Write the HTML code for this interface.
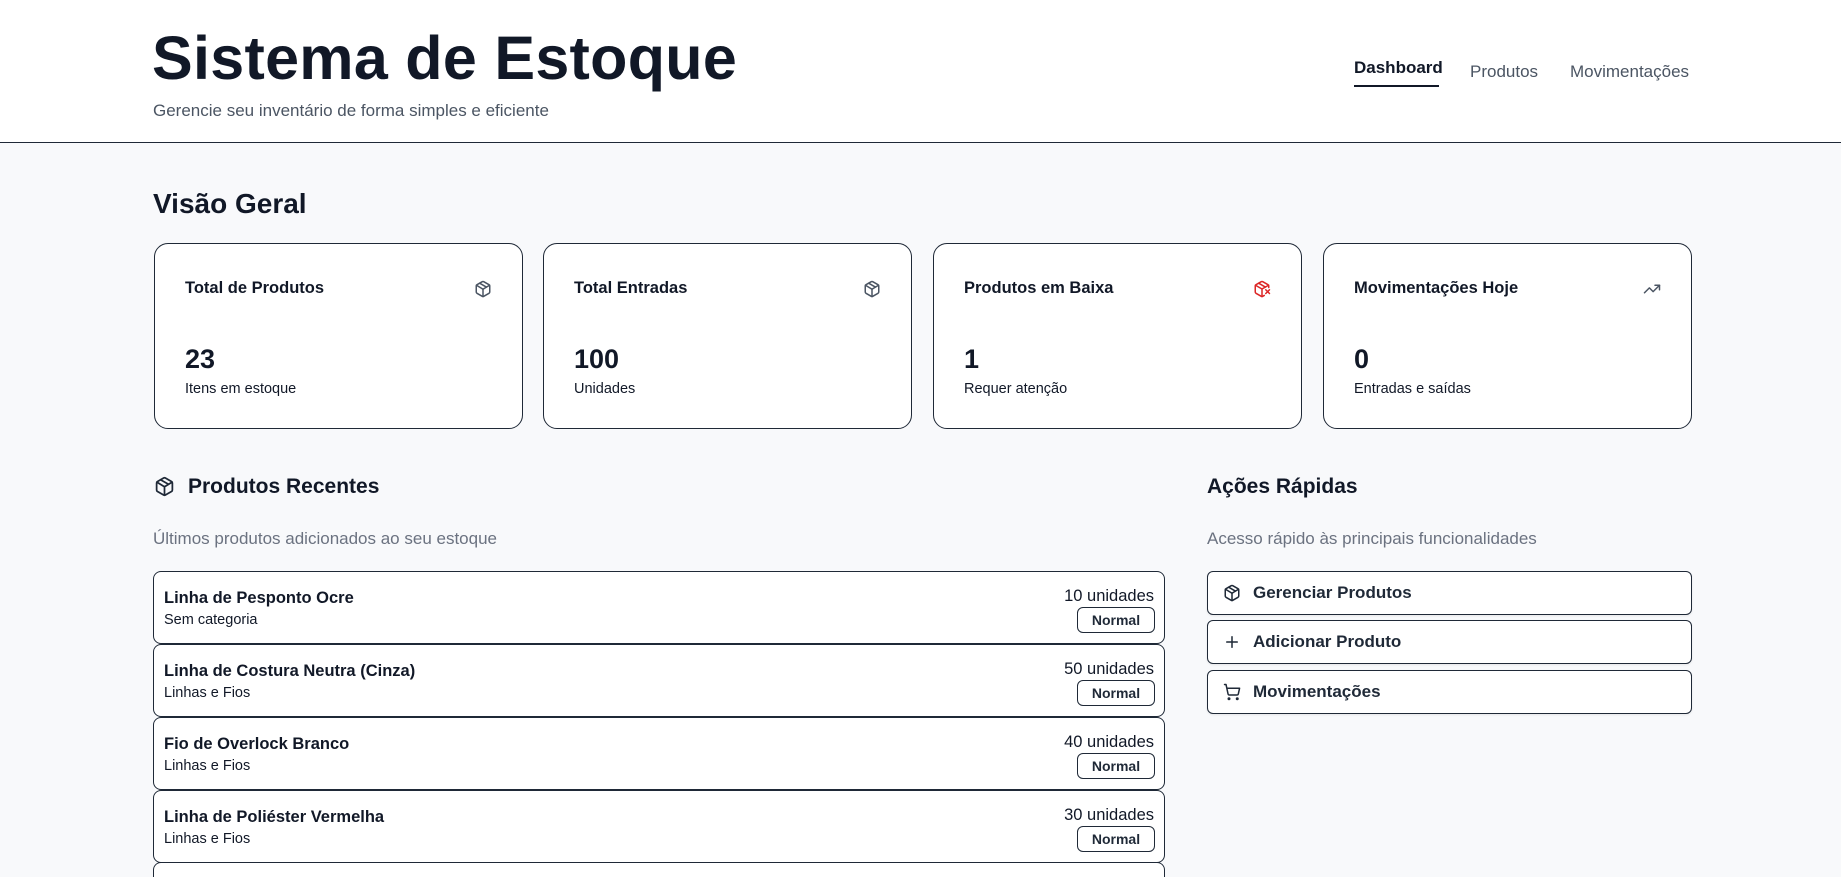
<!DOCTYPE html>
<html style="overflow:hidden;width:1841px;height:877px"><head><meta charset="utf-8"><style>
*{box-sizing:border-box;margin:0;padding:0}
body{width:1841px;height:877px;overflow:hidden;background:#f8f9fb;font-family:"Liberation Sans",sans-serif;color:#111827;position:relative}
.a{position:absolute;white-space:nowrap}
header{position:absolute;left:0;top:0;width:1841px;height:143px;background:#fff;border-bottom:1.5px solid #1f2937}
.card{position:absolute;top:243px;width:369px;height:186px;background:#fff;border:1px solid #1f2937;border-radius:14px}
.ct{position:absolute;left:30px;top:35px;font-size:16.5px;font-weight:600;color:#111827}
.cn{position:absolute;left:30px;top:100px;font-size:27px;font-weight:700}
.cs{position:absolute;left:30px;top:137px;font-size:14.5px;color:#111827}
.ci{position:absolute;right:30px;top:36px}
.item{position:absolute;left:153px;width:1012px;height:73px;background:#fff;border:1px solid #1f2937;border-radius:8px}
.in{position:absolute;left:10px;top:17px;font-size:16.5px;font-weight:600;color:#111827}
.ic{position:absolute;left:10px;top:40px;font-size:14.5px;color:#111827}
.iu{position:absolute;right:10px;top:15px;font-size:16.5px;color:#111827}
.bd{position:absolute;right:9px;top:35px;width:78px;height:26px;border:1px solid #1f2937;border-radius:6px;font-size:14px;font-weight:700;text-align:center;line-height:24px;color:#1f2937}
.btn{position:absolute;left:1207px;width:485px;height:44px;background:#fff;border:1px solid #1f2937;border-radius:6px;box-shadow:0 1px 2px rgba(0,0,0,.08)}
.btn svg{position:absolute;left:15px;top:12px}
.btn span{position:absolute;left:45px;top:11px;font-size:17px;font-weight:600;color:#1f2937}
</style></head><body>
<header>
<div class="a" style="left:152px;top:23px;font-size:61px;font-weight:700;color:#111827;letter-spacing:0.3px">Sistema de Estoque</div>
<div class="a" style="left:153px;top:101px;font-size:17px;color:#4b5563">Gerencie seu inventário de forma simples e eficiente</div>
<div class="a" style="left:1354px;top:58px;font-size:17px;font-weight:600;color:#111827">Dashboard</div>
<div class="a" style="left:1354px;top:85px;width:85px;height:2px;background:#111827"></div>
<div class="a" style="left:1470px;top:62px;font-size:17px;color:#4b5563">Produtos</div>
<div class="a" style="left:1570px;top:62px;font-size:17px;color:#4b5563">Movimentações</div>
</header>

<div class="a" style="left:153px;top:188px;font-size:28px;font-weight:700;color:#111827">Visão Geral</div>

<svg width="0" height="0" style="position:absolute"><defs>
<g id="pk"><path d="M11 21.73a2 2 0 0 0 2 0l7-4A2 2 0 0 0 21 16V8a2 2 0 0 0-1-1.73l-7-4a2 2 0 0 0-2 0l-7 4A2 2 0 0 0 3 8v8a2 2 0 0 0 1 1.730z"/><path d="M12 22V12"/><path d="m3.3 7 7.7 4.73a2 2 0 0 0 2 0L20.7 7"/><path d="m7.5 4.27 9 5.15"/></g>
</defs></svg>

<div class="card" style="left:154px"><div class="ct">Total de Produtos</div>
<svg class="ci" width="18" height="18" viewBox="0 0 24 24" fill="none" stroke="#4b5563" stroke-width="2" stroke-linecap="round" stroke-linejoin="round"><use href="#pk"/></svg>
<div class="cn">23</div><div class="cs">Itens em estoque</div></div>
<div class="card" style="left:543px"><div class="ct">Total Entradas</div>
<svg class="ci" width="18" height="18" viewBox="0 0 24 24" fill="none" stroke="#4b5563" stroke-width="2" stroke-linecap="round" stroke-linejoin="round"><use href="#pk"/></svg>
<div class="cn">100</div><div class="cs">Unidades</div></div>
<div class="card" style="left:933px"><div class="ct">Produtos em Baixa</div>
<svg class="ci" width="18" height="18" viewBox="0 0 24 24" fill="none" stroke="#dc2626" stroke-width="2" stroke-linecap="round" stroke-linejoin="round"><path d="M21 10V8a2 2 0 0 0-1-1.73l-7-4a2 2 0 0 0-2 0l-7 4A2 2 0 0 0 3 8v8a2 2 0 0 0 1 1.73l7 4a2 2 0 0 0 2 0l2-1.14"/><path d="m7.5 4.27 9 5.15"/><path d="M3.29 7 12 12l8.71-5"/><path d="M12 22V12"/><path d="m17 13 5 5"/><path d="m22 13-5 5"/></svg>
<div class="cn">1</div><div class="cs">Requer atenção</div></div>
<div class="card" style="left:1323px"><div class="ct">Movimentações Hoje</div>
<svg class="ci" width="18" height="18" viewBox="0 0 24 24" fill="none" stroke="#4b5563" stroke-width="2" stroke-linecap="round" stroke-linejoin="round"><polyline points="22 7 13.5 15.5 8.5 10.5 2 17"/><polyline points="16 7 22 7 22 13"/></svg>
<div class="cn">0</div><div class="cs">Entradas e saídas</div></div>

<svg class="a" style="left:154px;top:476px" width="21" height="21" viewBox="0 0 24 24" fill="none" stroke="#1f2937" stroke-width="2" stroke-linecap="round" stroke-linejoin="round"><use href="#pk"/></svg>
<div class="a" style="left:188px;top:475px;font-size:21px;font-weight:600;color:#111827">Produtos Recentes</div>
<div class="a" style="left:153px;top:529px;font-size:17px;color:#6b7280">Últimos produtos adicionados ao seu estoque</div>

<div class="item" style="top:571px"><div class="in">Linha de Pesponto Ocre</div><div class="ic">Sem categoria</div><div class="iu">10 unidades</div><div class="bd">Normal</div></div>
<div class="item" style="top:644px"><div class="in">Linha de Costura Neutra (Cinza)</div><div class="ic">Linhas e Fios</div><div class="iu">50 unidades</div><div class="bd">Normal</div></div>
<div class="item" style="top:717px"><div class="in">Fio de Overlock Branco</div><div class="ic">Linhas e Fios</div><div class="iu">40 unidades</div><div class="bd">Normal</div></div>
<div class="item" style="top:790px"><div class="in">Linha de Poliéster Vermelha</div><div class="ic">Linhas e Fios</div><div class="iu">30 unidades</div><div class="bd">Normal</div></div>
<div class="item" style="top:862px;height:15px;border-bottom:none;border-radius:8px 8px 0 0"></div>

<div class="a" style="left:1207px;top:475px;font-size:21px;font-weight:600;color:#111827">Ações Rápidas</div>
<div class="a" style="left:1207px;top:529px;font-size:17px;color:#6b7280">Acesso rápido às principais funcionalidades</div>

<div class="btn" style="top:571px"><svg width="18" height="18" viewBox="0 0 24 24" fill="none" stroke="#1f2937" stroke-width="2" stroke-linecap="round" stroke-linejoin="round"><use href="#pk"/></svg><span>Gerenciar Produtos</span></div>
<div class="btn" style="top:620px"><svg width="18" height="18" viewBox="0 0 24 24" fill="none" stroke="#1f2937" stroke-width="2" stroke-linecap="round"><path d="M5 12h14"/><path d="M12 5v14"/></svg><span>Adicionar Produto</span></div>
<div class="btn" style="top:670px"><svg width="18" height="18" viewBox="0 0 24 24" fill="none" stroke="#1f2937" stroke-width="2" stroke-linecap="round" stroke-linejoin="round"><circle cx="8" cy="21" r="1"/><circle cx="19" cy="21" r="1"/><path d="M2.05 2.05h2l2.66 12.42a2 2 0 0 0 2 1.58h9.78a2 2 0 0 0 1.95-1.57l1.65-7.43H5.12"/></svg><span>Movimentações</span></div>
</body></html>
